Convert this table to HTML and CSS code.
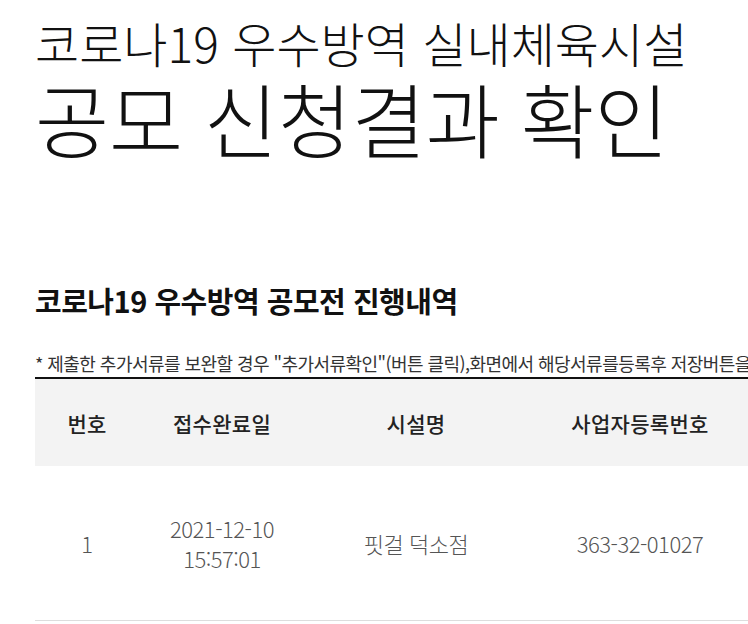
FILE: index.html
```html
<!DOCTYPE html>
<html lang="ko">
<head>
<meta charset="utf-8">
<title>공모 신청결과 확인</title>
<link rel="stylesheet" href="styles.css">
</head>
<body>
<div class="page">
  <h1 class="title">
    <span class="title-sub">코로나19 우수방역 실내체육시설</span>
    <span class="title-main">공모 신청결과 확인</span>
  </h1>
  <h2 class="section-title">코로나19 우수방역 공모전 진행내역</h2>
  <p class="note">* 제출한 추가서류를 보완할 경우 "추가서류확인"(버튼 클릭),화면에서 해당서류를등록후 저장버튼을 클릭하세요.</p>
  <table class="result">
    <colgroup>
      <col class="c-no"><col class="c-date"><col class="c-name"><col class="c-biz"><col class="c-rest">
    </colgroup>
    <thead>
      <tr><th>번호</th><th>접수완료일</th><th>시설명</th><th>사업자등록번호</th><th></th></tr>
    </thead>
    <tbody>
      <tr><td>1</td><td>2021-12-10<br>15:57:01</td><td>핏걸 덕소점</td><td>363-32-01027</td><td></td></tr>
    </tbody>
  </table>
</div>
</body>
</html>
```
FILE: styles.css
```css
html, body {
  margin: 0;
  padding: 0;
  background: #fff;
  overflow: hidden;
}
body {
  font-family: "Noto Sans CJK KR", "Noto Sans", sans-serif;
  color: #111;
}
.page {
  padding: 12px 0 0 35px;
  width: 1100px;
}
.title {
  margin: 0;
  font-weight: 300;
  display: flex;
  flex-direction: column;
}
.title-sub {
  font-size: 48px;
  line-height: 60px;
  letter-spacing: 0;
  word-spacing: 0;
}
.title-main {
  font-size: 80.5px;
  line-height: 90px;
  letter-spacing: 0;
  word-spacing: -2px;
}
.section-title {
  margin: 118px 0 0;
  font-size: 29px;
  line-height: 40px;
  font-weight: 700;
  letter-spacing: -0.5px;
}
.note {
  margin: 30px 0 0;
  font-size: 18px;
  line-height: 26px;
  color: #333;
  white-space: nowrap;
  letter-spacing: -0.55px;
  border-bottom: 2px solid #111;
  padding-bottom: 1px;
}
.result {
  border-collapse: collapse;
  width: 1065px;
  table-layout: fixed;
}
.c-no { width: 104px; }
.c-date { width: 166px; }
.c-name { width: 222px; }
.c-biz { width: 226px; }
.result th {
  background: #f3f3f3;
  height: 87px;
  font-size: 21px;
  font-weight: 500;
  color: #222;
  letter-spacing: 0.3px;
  padding: 0;
}
.result td {
  height: 154px;
  text-align: center;
  font-size: 22px;
  line-height: 30px;
  color: #555;
  font-weight: 300;
  letter-spacing: -0.5px;
  border-bottom: 1px solid #ddd;
  padding: 0;
}
```
